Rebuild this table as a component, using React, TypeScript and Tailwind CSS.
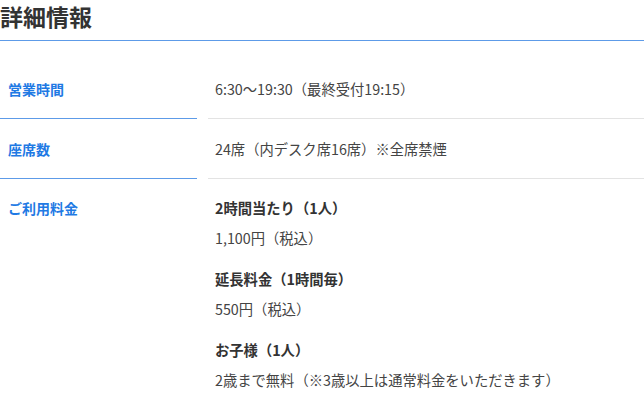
import React from "react";

const font = { fontFamily: '"Noto Sans CJK JP", "Noto Sans", sans-serif' };

export default function App() {
  return (
    <div className="w-[644px] h-[406px] bg-white overflow-hidden" style={font}>
      <h2 className="text-[23px] leading-[32px] font-bold text-[#333333] pb-[8px] border-b border-solid border-b-[color:#5d9be8]">
        詳細情報
      </h2>
      <dl className="mt-[18px]">
        <div className="flex gap-[11px]">
          <dt className="w-[197px] shrink-0 border-b border-solid border-b-[color:#5d9be8] pl-[8px] pb-[14px] pt-[15px] text-[14px] leading-[30px] font-bold text-[#1f7ae4]">
            営業時間
          </dt>
          <dd className="flex-1 border-b border-solid border-b-[color:#e3e3e3] pl-[7px] pb-[14px] pt-[15px] text-[14.3px] leading-[30px] text-[#444444]">
            6:30〜19:30（最終受付19:15）
          </dd>
        </div>
        <div className="flex gap-[11px]">
          <dt className="w-[197px] shrink-0 border-b border-solid border-b-[color:#5d9be8] pl-[8px] pb-[14px] pt-[15px] text-[14px] leading-[30px] font-bold text-[#1f7ae4]">
            座席数
          </dt>
          <dd className="flex-1 border-b border-solid border-b-[color:#e3e3e3] pl-[7px] pb-[14px] pt-[15px] text-[14.3px] leading-[30px] text-[#444444]">
            24席（内デスク席16席）※全席禁煙
          </dd>
        </div>
        <div className="flex gap-[11px]">
          <dt className="w-[197px] shrink-0 border-b border-solid border-b-[color:#5d9be8] pl-[8px] pb-[14px] pt-[14px] text-[14px] leading-[30px] font-bold text-[#1f7ae4]">
            ご利用料金
          </dt>
          <dd className="flex-1 border-b border-solid border-b-[color:#e3e3e3] pl-[7px] pb-[14px] pt-[14px] text-[14.3px] leading-[30px] text-[#444444]">
            <p className="font-bold text-[#333333]">2時間当たり（1人）</p>
            <p className="mb-[11px]">1,100円（税込）</p>
            <p className="font-bold text-[#333333]">延長料金（1時間毎）</p>
            <p className="mb-[11px]">550円（税込）</p>
            <p className="font-bold text-[#333333]">お子様（1人）</p>
            <p>2歳まで無料（※3歳以上は通常料金をいただきます）</p>
          </dd>
        </div>
      </dl>
    </div>
  );
}
